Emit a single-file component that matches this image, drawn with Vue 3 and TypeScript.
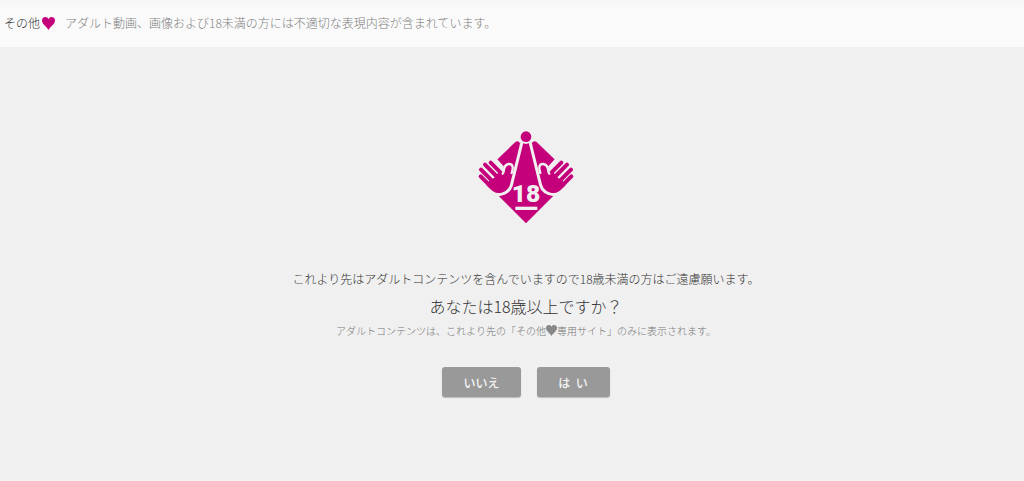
<script setup lang="ts">
const notice = 'アダルト動画、画像および18未満の方には不適切な表現内容が含まれています。'
const choices: string[] = ['いいえ', 'は\u00a0 い']
</script>

<template>
  <div class="page">
    <header class="bar">
      <span class="brand">その他<svg class="heart" viewBox="0 0 12 12" aria-hidden="true"><path d="M6 12C5 9.500 .2 7 0 3.500C-.2-.6 5-1 6 2C7-1 12.200-.6 12 3.500C11.800 7 7 9.500 6 12Z" /></svg></span>
      <span class="notice">{{ notice }}</span>
    </header>
    <main class="gate">
      <svg class="logo" viewBox="0 0 336 318" role="img" aria-label="18">
        <path class="ink" d="M168 50L150 56L118 180L84 214L168 298L252 214L218 180L186 56Z" />
        <g id="arm">
          <path class="ink" d="M80 108L136 54Q145 49 150 57L126 185L104 188L100 130Z" />
          <path class="ink" d="M84 207Q71 206 60 194L48 182L58 171L72 162L90 140L96 148Q100 151 104 145L108 126L124 122L130 165L122 196Q112 209 84 207Z" />
          <path class="finger" d="M32 157L62 187M33 137L68 172M45 122L82 159M62 116L94 148" />
          <path class="line" d="M76 106L99 131" />
          <path class="line hook" d="M98 149C102 146 101 139 103 132C107 117 126 116 128 129Q129 135 125 147" />
          <path class="line" d="M156 54L124 184Q117 210 80 213" />
        </g>
        <use href="#arm" transform="translate(336 0) scale(-1 1)" />
        <circle class="clear" cx="168" cy="38" r="22" />
        <circle class="ink" cx="168" cy="38" r="16" />
        <text class="age" x="168" y="235" text-anchor="middle">18</text>
        <path class="clear" d="M136 248H202V258H136Z" />
      </svg>
      <p class="warning">これより先はアダルトコンテンツを含んでいますので18歳未満の方はご遠慮願います。</p>
      <h1 class="question">あなたは18歳以上ですか？</h1>
      <p class="note">アダルトコンテンツは、これより先の「その他<svg class="heart" viewBox="0 0 12 12" aria-hidden="true"><path d="M6 12C5 9.500 .2 7 0 3.500C-.2-.6 5-1 6 2C7-1 12.200-.6 12 3.500C11.800 7 7 9.500 6 12Z" /></svg>専用サイト」のみに表示されます。</p>
      <div class="choices">
        <button v-for="choice in choices" :key="choice" type="button" class="choice">{{ choice }}</button>
      </div>
    </main>
  </div>
</template>

<style>
body { background: #f0f0f0; }
</style>

<style scoped>
.page {
  min-height: 100vh;
  box-sizing: border-box;
  color: #333;
  font-family: "Noto Sans CJK JP", sans-serif;
  font-size: 12px;
  font-weight: 300;
}
.bar {
  display: flex;
  align-items: center;
  gap: 10px;
  padding: 14px 4px 15px;
  line-height: 18px;
  background: linear-gradient(#f6f6f6, #fafafa 6px);
}
.brand { display: flex; align-items: center; gap: 2px; }
.brand .heart { width: 13px; height: 13px; fill: #c5007b; }
.notice { color: #808080; }
.gate {
  display: flex;
  flex-direction: column;
  align-items: center;
  padding: 77px 0 83px 28px;
  text-align: center;
}
.logo { width: 112px; height: 106px; }
.ink { fill: #c5007b; }
.clear { fill: #f0f0f0; }
.finger { fill: none; stroke: #c5007b; stroke-width: 12; stroke-linecap: round; }
.line { fill: none; stroke: #f0f0f0; stroke-width: 9; }
.hook { stroke-width: 7; stroke-linecap: round; }
.age {
  fill: #f0f0f0;
  font-family: Roboto, sans-serif;
  font-size: 74px;
  font-weight: 900;
}
.warning { margin: 39px 0 0; line-height: 20px; }
.question { margin: 5px 0 0; font-size: 16px; line-height: 24px; font-weight: 300; }
.note { margin: 4px 0 0; font-size: 10px; line-height: 18px; color: #777; }
.note .heart { width: 11px; height: 11px; fill: #888; vertical-align: -1px; }
.choices { display: flex; gap: 16px; margin-top: 27px; }
.choice {
  min-width: 73px;
  padding: 7px 21px 5px;
  border: 0;
  border-radius: 3px;
  background: #999;
  box-shadow: 0 1px 1px #bbb;
  color: #f4f4f4;
  font: 500 12px/18px "Noto Sans CJK JP", sans-serif;
}
</style>
